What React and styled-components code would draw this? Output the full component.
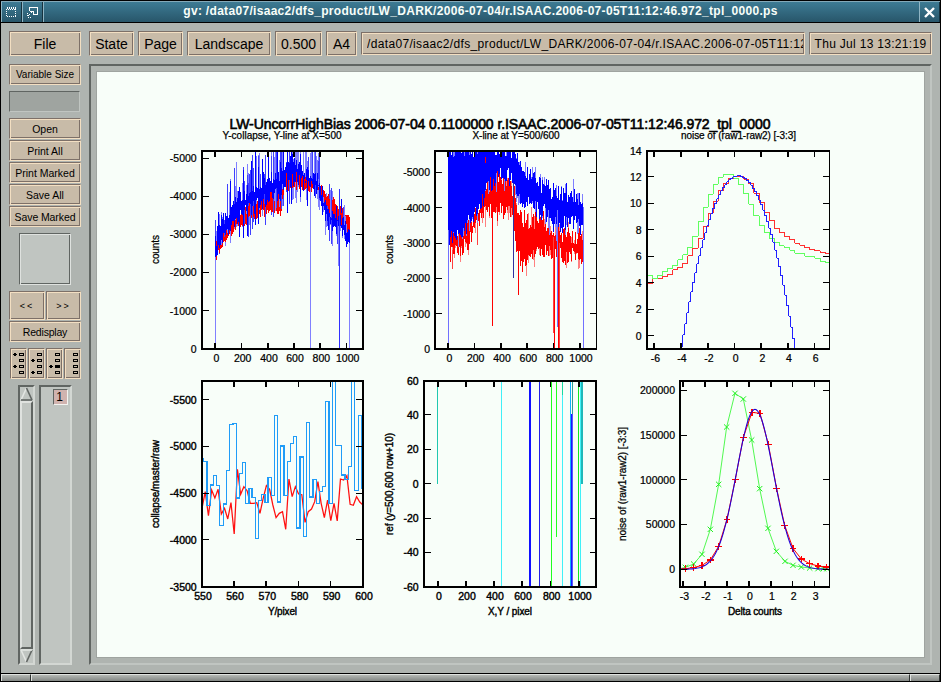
import React from "react";
import styled, { createGlobalStyle, css } from "styled-components";

const GlobalStyle = createGlobalStyle`
  * {
    box-sizing: border-box;
  }
  body {
    margin: 0;
    overflow: hidden;
    font-family: "Liberation Sans", Arial, sans-serif;
    color: #000;
  }
`;

const Window = styled.div`
  width: 941px;
  height: 682px;
  display: flex;
  flex-direction: column;
  background: #afb4b0;
  border: 1px solid #000;
`;

const TitleBar = styled.div`
  height: 22px;
  display: flex;
  color: #f8fef9;
  background: linear-gradient(#3d7b94, #28566a);
  border-top: 1px solid #84a9b8;
  border-bottom: 1px solid #000;
`;

const TitleButton = styled.div`
  width: 21px;
  height: 20px;
  display: flex;
  justify-content: center;
  align-items: center;
  border-left: 1px solid #8fb5c4;
  border-right: 1px solid #16323e;
`;

const Title = styled.div`
  flex: 1;
  text-align: center;
  font-size: 12px;
  font-weight: bold;
  line-height: 19px;
  letter-spacing: 0.31px;
  white-space: nowrap;
  padding-right: 2px;
  border-left: 1px solid #8fb5c4;
`;

const Body = styled.div`
  flex: 1;
  display: flex;
  gap: 8px;
  padding: 8px;
`;

const Sidebar = styled.div`
  width: 72px;
  display: flex;
  flex-direction: column;
`;

const Main = styled.div`
  width: 843px;
  display: flex;
  flex-direction: column;
`;

const Toolbar = styled.div`
  height: 25px;
  display: flex;
  align-items: center;
  gap: 4px;
  margin-bottom: 8px;
`;

const raised = css`
  background: #c8bba8;
  border: 1px solid;
  border-color: #7d7068 #f3dfc2 #f3dfc2 #7d7068;
  box-shadow: inset 1px 1px #f3dfc2, inset -1px -1px #7d7068;
`;

const Button = styled.div`
  ${raised}
  width: ${(p) => p.$w || 72}px;
  height: ${(p) => p.$h || 21}px;
  flex: none;
  display: flex;
  justify-content: ${(p) => (p.$left ? "flex-start" : "center")};
  align-items: center;
  padding: ${(p) => (p.$left ? "0 1px 0 5px" : "0")};
  margin-bottom: ${(p) => p.$mb || 0}px;
  font-size: ${(p) => p.$size || 10.5}px;
  letter-spacing: ${(p) => p.$ls || 0}px;
  white-space: nowrap;
  overflow: hidden;
`;

const Clip = styled.span`
  overflow: hidden;
`;

const Locator = styled.div`
  width: 71px;
  height: 21px;
  margin-bottom: 6px;
  background: #9fa4a0;
  border: 1px solid;
  border-color: #606562 #c0c5c1 #c0c5c1 #606562;
`;

const Commands = styled.div`
  display: flex;
  flex-direction: column;
  gap: 1px;
  margin-bottom: 6px;
`;

const Panner = styled.div`
  width: 52px;
  height: 52px;
  margin: 0 0 6px 10px;
  background: #c0c5c1;
  border: 1px solid;
  border-color: #606562 #dfe2df #dfe2df #606562;
  box-shadow: inset 1px 1px #dfe2df, inset -1px -1px #606562;
`;

const Row = styled.div`
  display: flex;
  gap: 1px;
  margin: 0 0 ${(p) => p.$mb || 0}px ${(p) => p.$ml || 0}px;
`;

const Lists = styled.div`
  display: flex;
  gap: 4px;
  height: 280px;
  padding-left: 9px;
`;

const Sunken = styled.div`
  width: ${(p) => p.$w}px;
  background: #c0c5c1;
  border: 2px solid;
  border-color: #606562 #d3d7d3 #d3d7d3 #606562;
`;

const Scrollbar = styled(Sunken)`
  display: flex;
  flex-direction: column;
  align-items: center;
`;

const Thumb = styled.div`
  flex: 1;
  width: 13px;
  background: #c0c5c1;
  border: 2px solid;
  border-color: #dfe2df #606562 #606562 #dfe2df;
`;

const PageNumber = styled.div`
  width: 15px;
  height: 16px;
  margin: 2px 0 0 12px;
  text-align: center;
  font-size: 12px;
  line-height: 15px;
  padding-right: 2px;
  background: #d0b3af;
  border: 1px solid;
  border-color: #606562 #f3f3f0 #f3f3f0 #606562;
`;

const Viewport = styled.div`
  flex: none;
  width: 843px;
  height: 601px;
  padding: 5px;
  border: 2px solid;
  border-color: #606562 #c0c5c1 #c0c5c1 #606562;
`;

const Page = styled.div`
  width: 829px;
  height: 587px;
  background: #f8fef9;
  border: 1px solid #9fa4a0;
`;

const Handle = styled.div`
  height: 8px;
  display: flex;
  border-top: 1px solid #000;
`;

const HandlePart = styled.div`
  width: ${(p) => p.$w}px;
  flex: ${(p) => (p.$w ? "none" : 1)};
  background: linear-gradient(#b4b8b4, #828683);
  border-top: 1px solid #dfe2df;
  border-left: 1px solid #dfe2df;
  border-right: 1px solid #303432;
`;

const Plots = styled.svg`
  display: block;
  font-family: "Liberation Sans", Arial, sans-serif;
`;

const RED = "#ff0000";
const BLUE = "#0000ff";
const GREEN = "#50f850";

// Plot coordinates are in thirds of a pixel, relative to each plot's origin.
const random = (seed) => () => {
  seed = (seed * 16807) % 2147483647;
  return seed / 2147483647;
};

const lerp = (rows, x) => {
  let i = 1;
  while (i < rows.length - 1 && rows[i][0] < x) i++;
  const [a, b] = [rows[i - 1], rows[i]];
  const t = Math.min(1, Math.max(0, (x - a[0]) / (b[0] - a[0])));
  return [a[1] + (b[1] - a[1]) * t, a[2] + (b[2] - a[2]) * t];
};

const noise = (rows, seed, amp, chance = 1, min = 123) => {
  const rnd = random(seed);
  let d = "";
  for (let x = rows[0][0]; x <= rows[rows.length - 1][0]; x += 3) {
    const [top, bottom] = lerp(rows, x);
    const a = Math.max(min, top + (rnd() - 0.5) * amp);
    const b = bottom + (rnd() - 0.5) * amp;
    if (rnd() < chance) d += `M${x + 0.5} ${a.toFixed(1)}V${b.toFixed(1)}`;
  }
  return d;
};

const line = (pts) => "M" + pts.map((p) => p.join(" ")).join("L");

// pairs of [value, right edge]
const steps = (start, pts) =>
  `M${start} ${pts[0][0]}` + pts.map(([y, x]) => `V${y}H${x}`).join("");

const even = (start, w, ys) => ys.map((y, i) => [y, Math.min(644, start + w * i)]);

const collapseRed = [
  [211, 400, 450], [225, 345, 415], [240, 330, 388], [270, 320, 352], [300, 290, 336],
  [340, 270, 315], [380, 240, 304], [408, 250, 315], [412, 240, 265], [418, 195, 235],
  [450, 190, 234], [480, 205, 234], [520, 222, 248], [530, 235, 262], [545, 262, 292],
  [570, 275, 315], [600, 312, 358], [613, 322, 378],
];
const collapseBlue = [
  [211, 400, 455], [218, 365, 420], [230, 330, 388], [250, 308, 358], [270, 270, 325],
  [300, 258, 308], [340, 240, 282], [380, 200, 254], [408, 195, 250], [415, 170, 228],
  [440, 140, 208], [460, 160, 214], [480, 190, 230], [520, 208, 247], [530, 240, 290],
  [550, 300, 338], [570, 320, 352], [590, 320, 350], [600, 345, 395], [613, 372, 425],
];
const collapseSpikes = [
  [211, 380, 440], [225, 330, 400], [250, 255, 375], [275, 210, 350], [300, 190, 345],
  [330, 172, 315], [360, 150, 298], [375, 120, 278], [400, 112, 280], [470, 105, 245],
  [485, 125, 240], [520, 130, 255], [526, 195, 290], [540, 240, 340], [560, 270, 370],
  [585, 300, 375], [613, 350, 425],
];
const lineRed = [
  [205, 380, 430], [220, 360, 435], [250, 350, 415], [280, 320, 375], [300, 280, 330],
  [320, 230, 312], [350, 190, 308], [370, 195, 303], [395, 240, 308], [405, 260, 360],
  [412, 330, 440], [430, 325, 465], [460, 335, 445], [490, 325, 425], [520, 360, 432],
  [560, 372, 438], [600, 380, 438], [609, 388, 448],
];
const lineBlue = [
  [205, 112, 390], [240, 112, 362], [270, 112, 335], [300, 112, 280], [330, 112, 225],
  [350, 112, 200], [370, 112, 195], [390, 120, 202], [410, 148, 235], [430, 188, 278],
  [460, 208, 294], [490, 226, 304], [520, 246, 346], [560, 248, 340], [590, 260, 342],
  [609, 285, 370],
];
const logRed = [
  522, 506, 506, 500, 493, 480, 472, 460, 437, 415, 385, 350, 310, 274, 243, 220, 205, 199,
  199, 208, 222, 250, 277, 307, 331, 355, 367, 381, 390, 400, 406, 414, 419, 423, 427, 431,
];
const logGreen = [
  496, 506, 497, 486, 475, 466, 450, 435, 412, 379, 335, 292, 253, 223, 202, 193, 194, 205,
  225, 252, 283, 317, 346, 367, 385, 397, 407, 412, 421, 430, 432, 439, 441, 445, 454, 458,
];
const logBlue = [];
for (let x = 201; x < 545; x += 6) {
  logBlue.push([Math.min(717, Math.round(198 + 519 * ((x - 371) / 171) ** 2)), Math.min(542, x + 3)]);
}

const rawBlue = [
  [265, 176], [274, 186], [406, 196], [345, 205], [317, 215], [346, 223], [466, 235],
  [402, 244], [302, 254], [163, 264], [161, 274], [384, 284], [310, 292], [278, 302],
  [400, 312], [356, 321], [383, 331], [505, 341], [391, 350], [374, 360], [397, 369],
  [323, 379], [377, 388], [136, 398], [396, 407], [228, 417], [376, 428], [275, 437],
  [220, 446], [200, 455], [474, 465], [261, 475], [500, 485], [157, 494], [381, 504],
  [329, 514], [400, 524], [365, 533], [349, 542], [95, 552], [400, 563], [32, 572],
  [227, 589], [315, 600], [328, 610], [290, 620], [32, 629], [361, 640], [137, 650], [355, 654],
];
const rawRed = [
  415, 365, 437, 360, 384, 358, 432, 415, 447, 398, 492, 298, 373, 350, 362, 400, 400, 398,
  430, 385, 347, 358, 405, 443, 430, 425, 478, 327, 380, 350, 372, 374, 457, 425, 417, 395,
  335, 400, 443, 390, 452, 400, 453, 327, 330, 317, 403, 406, 380, 396, 405,
].map((y, i) => [171 + i * 9.66, y]);

const refLines = [
  [172, 32, 342, "#20c8b0", 3], [364, 32, 650, "#40f0f8", 3], [450, 32, 650, "#1010ff", 6],
  [478, 32, 650, "#2020e8", 3], [514, 32, 650, "#20ff20", 3], [529, 32, 500, "#20ff20", 4],
  [547, 32, 76, "#18d8a0", 3], [547, 76, 650, "#40f0f8", 3], [572, 32, 650, "#10b0ff", 3],
  [575, 133, 650, "#1818ff", 3], [578, 32, 133, "#30a090", 5], [578, 133, 650, "#5858ff", 3],
  [596, 32, 650, "#10e820", 4], [601, 32, 650, "#40f0f8", 3], [606, 32, 342, "#20b8b8", 6],
];

const countsGreen = [
  [196, 596], [211, 592], [236, 582], [261, 553], [286, 478], [311, 343], [335, 171],
  [360, 70], [385, 87], [410, 210], [434, 356], [459, 475], [484, 544], [510, 574],
  [534, 586], [559, 591], [584, 594], [609, 596], [625, 596], [636, 596],
];
const countsRed = [
  [196, 597], [211, 596], [236, 593], [261, 586], [286, 570], [311, 529], [336, 448],
  [361, 328], [385, 202], [411, 127], [435, 130], [460, 223], [485, 356], [509, 466],
  [534, 535], [559, 567], [584, 581], [609, 588], [634, 591], [644, 592],
];
const gauss = [];
for (let x = 196; x <= 644; x += 4) {
  gauss.push([x, 598 - 480 * Math.exp(-((x - 420) ** 2) / (2 * 55.2 ** 2))]);
}

function Axes({ box, xs, ys, xl, yl, heavy }) {
  const [l, t, r, b] = box;
  return (
    <g>
      <g stroke="#000" strokeWidth="3" fill="none" shapeRendering="crispEdges">
        <rect x={l} y={t} width={r - l} height={b - t} strokeWidth="5" />
        {xs.map((x) => (
          <path key={x} strokeWidth="5" d={`M${x} ${t}v18M${x} ${b}v-18`} />
        ))}
        {ys.map((y) => (
          <path key={y} d={`M${l} ${y}h20M${r} ${y}h-20`} />
        ))}
      </g>
      <g fontSize="31.5" stroke="#000" strokeWidth={heavy ? 1.2 : 0.7}>
        {xl.map((s, i) => (
          <text key={s} x={xs[i] + 3} y={b + 39} textAnchor="middle">
            {s}
          </text>
        ))}
        {yl.map((s, i) => (
          <text key={s} x={l - 16} y={ys[i] + 11} textAnchor="end">
            {s}
          </text>
        ))}
      </g>
    </g>
  );
}

const Plot = ({ x, y, id, box, children, ...axes }) => (
  <g transform={`translate(${x} ${y}) scale(0.333333)`}>
    <clipPath id={id}>
      <rect x={box[0]} y={box[1]} width={box[2] - box[0]} height={box[3] - box[1]} />
    </clipPath>
    <g clipPath={`url(#${id})`} fill="none">
      {children}
    </g>
    <Axes box={box} {...axes} />
  </g>
);

const Label = ({ x, y, w, children, size = 10, rotate, weight = 0.25 }) => (
  <text
    x={x}
    y={y}
    fontSize={size}
    textLength={w}
    textAnchor="middle"
    stroke="#000"
    strokeWidth={weight}
    transform={rotate ? `rotate(-90 ${x} ${y})` : undefined}
  >
    {children}
  </text>
);

const thousand = ["0", "200", "400", "600", "800", "1000"];

function Charts() {
  return (
    <Plots width="827" height="585" viewBox="97 72 827 585">
      <Label x={500} y={129} w={541} size={14} weight={0.6}>
        LW-UncorrHighBias 2006-07-04 0.1100000 r.ISAAC.2006-07-05T11:12:46.972_tpl_0000
      </Label>
      <Label x={282} y={139} w={119}>Y-collapse, Y-line at X=500</Label>
      <Label x={516} y={139} w={87}>X-line at Y=500/600</Label>
      <Label x={738.5} y={139} w={115}>noise of (raw1-raw2) [-3:3]</Label>

      <Plot
        id="p1" x={145} y={110} box={[171, 123, 654, 717]}
        xs={[211, 290, 369, 447, 526, 605]} xl={thousand}
        ys={[717, 603, 488, 374, 260, 145]}
        yl={["0", "-1000", "-2000", "-3000", "-4000", "-5000"]}
      >
        <g strokeWidth="3" shapeRendering="crispEdges">
          <path stroke={RED} d={noise(collapseRed, 71, 24)} />
          <path stroke="#8080ff" d={noise(collapseSpikes, 413, 80, 0.5)} />
          <path stroke="#4040ff" d={noise(collapseSpikes, 977, 100, 0.3)} />
          <path stroke={RED} d={noise(collapseRed, 808, 24, 0.3)} />
          <path stroke={BLUE} d={noise(collapseBlue, 1234, 46)} />
          <path stroke={BLUE} d={noise(collapseSpikes, 6001, 100, 0.2)} />
          <path stroke={RED} d={noise(collapseRed.slice(9, 13), 555, 16, 0.15)} />
          <path stroke={RED} d={noise(collapseRed.slice(13), 556, 20, 0.5)} />
          <path stroke="#8080ff" d="M274 157V260M211 440V717M496 230V717M614 400V717" />
          <path stroke="#3030ff" d="M584 238V717" />
          <path stroke="#8080ff" d="M581 350V468" />
        </g>
      </Plot>

      <Plot
        id="p2" x={380} y={110} box={[166, 123, 650, 717]}
        xs={[205, 284, 363, 442, 521, 600]} xl={thousand}
        ys={[717, 612, 506, 400, 294, 187]}
        yl={["0", "-1000", "-2000", "-3000", "-4000", "-5000"]}
      >
        <g strokeWidth="3" shapeRendering="crispEdges">
          <path stroke="#ff8080" d={noise(lineRed, 99, 90, 0.4)} />
          <path stroke={RED} d={noise(lineRed, 321, 56)} />
          <path stroke="#8080ff" d={noise(lineBlue, 17, 100, 0.5)} />
          <path stroke={BLUE} d={noise(lineBlue, 2222, 56)} />
          <path stroke={RED} d="M337 290V647M415 400V554M524 380V717M536 400V717M316 140V160" />
          <path stroke="#ff4040" d="M521 380V668M539 400V717M292 340V405M217 420V477" />
          <path stroke="#7070ff" d="M206 360V717M611 290V717M533 300V650" />
          <path stroke="#3030a0" d="M401 220V503" />
        </g>
      </Plot>

      <Plot
        id="p3" x={615} y={110} box={[96, 123, 644, 717]}
        xs={[118, 198, 279, 359, 439, 519, 599]} xl={["-6", "-4", "-2", "0", "2", "4", "6"]}
        ys={[678, 598, 519, 440, 360, 281, 201, 123]}
        yl={["0", "2", "4", "6", "8", "10", "12", "14"]}
      >
        <g strokeWidth="3" shapeRendering="crispEdges">
          <path stroke="#ff3030" d={steps(96, even(112, 15.25, logRed))} />
          <path stroke="#60ff60" d={steps(96, even(112, 15.25, logGreen))} />
          <path stroke="#2020ff" d={steps(201, logBlue)} />
        </g>
      </Plot>

      <Plot
        id="p4" x={145} y={370} box={[171, 33, 654, 651]} heavy
        xs={[171, 267, 364, 461, 557, 654]} xl={["550", "560", "570", "580", "590", "600"]}
        ys={[651, 510, 370, 230, 90]} yl={["-3500", "-4000", "-4500", "-5000", "-5500"]}
      >
        <path stroke="#ff1010" strokeWidth="3.8" d={line(rawRed)} />
        <path stroke="#209cf8" strokeWidth="3.6" shapeRendering="crispEdges" d={steps(171, rawBlue)} />
      </Plot>

      <Plot
        id="p5" x={380} y={370} box={[132, 33, 649, 651]} heavy
        xs={[174, 258, 342, 426, 512, 597]} xl={thousand}
        ys={[651, 548, 445, 342, 238, 135, 33]}
        yl={["-60", "-40", "-20", "0", "20", "40", "60"]}
      >
        <g shapeRendering="crispEdges">
          {refLines.map(([x, a, b, color, w], i) => (
            <path key={i} stroke={color} strokeWidth={w} d={`M${x} ${a}V${b}`} />
          ))}
        </g>
      </Plot>

      <Plot
        id="p6" x={615} y={370} box={[196, 33, 644, 651]}
        xs={[205, 270, 336, 402, 468, 533, 599]} xl={["-3", "-2", "-1", "0", "1", "2", "3"]}
        ys={[598, 464, 330, 196, 61]} yl={["0", "50000", "100000", "150000", "200000"]}
      >
        <path stroke={GREEN} strokeWidth="3" d={line(countsGreen)} />
        <path
          stroke="#20f020" strokeWidth="3"
          d={countsGreen.slice(1).map(([x, y]) => `M${x - 8} ${y - 8}l16 16m0 -16l-16 16`).join("")}
        />
        <path stroke={RED} strokeWidth="3" d={line(countsRed)} />
        <path
          stroke={RED} strokeWidth="3.6" shapeRendering="crispEdges"
          d={countsRed.slice(1).map(([x, y]) => `M${x - 10} ${y}h20m-10 -10v20`).join("")}
        />
        <path stroke="#2000d8" strokeWidth="3.2" d={line(gauss)} />
      </Plot>

      <Label rotate x={159} y={249.5} w={29}>counts</Label>
      <Label rotate x={393} y={249.5} w={29}>counts</Label>
      <Label rotate x={159} y={484} w={88} weight={0.4}>collapse/master/raw</Label>
      <Label rotate x={393} y={484} w={102} weight={0.4}>ref (y=500,600 row+10)</Label>
      <Label rotate x={626} y={484} w={114}>noise of (raw1-raw2) [-3:3]</Label>
      <Label x={282.5} y={615} w={29} weight={0.4}>Y/pixel</Label>
      <Label x={510} y={615} w={44} weight={0.4}>X,Y / pixel</Label>
      <Label x={755} y={615} w={54} weight={0.4}>Delta counts</Label>
    </Plots>
  );
}

// marks: rows that carry an arrow; filled: row drawn solid
const MarkIcon = ({ marks, filled }) => (
  <svg width="15" height="29" shapeRendering="crispEdges">
    {[0, 1, 2, 3].map((i) => (
      <g key={i} transform={`translate(0 ${4 + i * 6})`}>
        <rect x="8.5" y="0.5" width="4" height="2" fill={filled === i ? "#000" : "none"} stroke="#000" />
        {marks.includes(i) && <path d="M2 1h4v1h-4zM3 0h2v3h-2z" />}
      </g>
    ))}
  </svg>
);

const Arrow = ({ down }) => (
  <svg width="13" height="14" style={{ flex: "none" }}>
    <g fill="none" strokeWidth="1.6" transform={down ? "translate(0 14) scale(1 -1)" : undefined}>
      <path stroke="#e3e6e3" d="M1 13L6.5 1" />
      <path stroke="#606562" d="M6.5 1L12 13" />
      <path stroke={down ? "#e3e6e3" : "#606562"} d="M12 13H1" />
    </g>
  </svg>
);

const App = () => {
  return (
    <>
      <GlobalStyle />
      <Window>
        <TitleBar>
          <TitleButton>
            <svg width="11" height="11" shapeRendering="crispEdges">
              <rect x="0.5" y="0.5" width="9" height="9" fill="none" stroke="#fff" strokeDasharray="1 1" />
              <path d="M1 1.5h9M0 2.5h9" stroke="#fff" strokeDasharray="1 1" />
            </svg>
          </TitleButton>
          <TitleButton>
            <svg width="11" height="11" fill="none" stroke="#fff" shapeRendering="crispEdges">
              <path d="M2 1.5V0.5h8v7h-4M2.5 1v3M3 4.5h3v3" />
              <path d="M0.5 6v4h4M1 9l5 -5" strokeDasharray="1 1" />
            </svg>
          </TitleButton>
          <Title>gv: /data07/isaac2/dfs_product/LW_DARK/2006-07-04/r.ISAAC.2006-07-05T11:12:46.972_tpl_0000.ps</Title>
          <TitleButton>
            <svg width="11" height="11">
              <path d="M1 1l9 9M10 1l-9 9" stroke="#fff" strokeWidth="2.4" />
            </svg>
          </TitleButton>
        </TitleBar>
        <Body>
          <Sidebar>
            <Button $h={25} $size={14} $mb={8}>File</Button>
            <Button $mb={6} $size={10}>Variable Size</Button>
            <Locator />
            <Commands>
              <Button>Open</Button>
              <Button>Print All</Button>
              <Button>Print Marked</Button>
              <Button>Save All</Button>
              <Button $ls={-0.1}>Save Marked</Button>
            </Commands>
            <Panner />
            <Row $mb={1}>
              <Button $w={36} $h={29} $size={9} $ls={2}>&lt;&lt;</Button>
              <Button $w={35} $h={29} $size={9} $ls={2}>&gt;&gt;</Button>
            </Row>
            <Button $mb={6} $ls={-0.2}>Redisplay</Button>
            <Row $mb={6} $ml={1}>
              <Button $w={17} $h={31}><MarkIcon marks={[0, 2]} /></Button>
              <Button $w={17} $h={31}><MarkIcon marks={[1, 3]} /></Button>
              <Button $w={17} $h={31}><MarkIcon marks={[2]} filled={2} /></Button>
              <Button $w={17} $h={31}><MarkIcon marks={[]} /></Button>
            </Row>
            <Lists>
              <Scrollbar $w={17}>
                <Arrow />
                <Thumb />
                <Arrow down />
              </Scrollbar>
              <Sunken $w={33}>
                <PageNumber>1</PageNumber>
              </Sunken>
            </Lists>
          </Sidebar>
          <Main>
            <Toolbar>
              <Button $w={45} $h={25} $size={14}>State</Button>
              <Button $w={45} $h={25} $size={14}>Page</Button>
              <Button $w={84} $h={25} $size={14}>Landscape</Button>
              <Button $w={47} $h={25} $size={14}>0.500</Button>
              <Button $w={31} $h={25} $size={14}>A4</Button>
              <Button $w={444} $h={23} $size={12} $left $ls={0.34}>
                <Clip>/data07/isaac2/dfs_product/LW_DARK/2006-07-04/r.ISAAC.2006-07-05T11:12:46.972_tpl_0000.ps</Clip>
              </Button>
              <Button $w={123} $h={23} $size={12} $ls={0.3}>Thu Jul 13 13:21:19</Button>
            </Toolbar>
            <Viewport>
              <Page>
                <Charts />
              </Page>
            </Viewport>
          </Main>
        </Body>
        <Handle>
          <HandlePart $w={30} />
          <HandlePart />
          <HandlePart $w={30} />
        </Handle>
      </Window>
    </>
  );
};

export default App;
